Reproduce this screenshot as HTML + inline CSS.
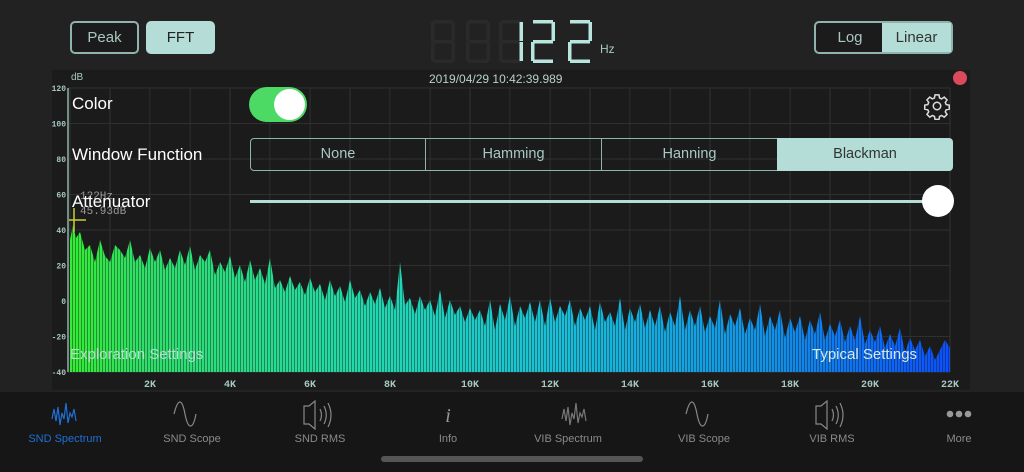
<!DOCTYPE html>
<html><head><meta charset="utf-8"><style>
*{margin:0;padding:0;box-sizing:border-box}
body{width:1024px;height:472px;background:#222;font-family:"Liberation Sans",sans-serif;overflow:hidden;position:relative;color:#fff}
.abs{position:absolute}
.btn{position:absolute;border:2px solid #8fb3ad;border-radius:5px;font-size:15px;color:#a8c8c3;text-align:center;line-height:29px;height:33px}
.tab{position:absolute;top:433px;font-size:11px;color:#8a8a8a;text-align:center;width:110px}
.seg{position:absolute;top:138px;height:33px;border:1.5px solid #8fb3ad;font-size:14.5px;color:#a8c8c3;text-align:center;line-height:30px}
</style></head><body>
<div class="btn" style="left:70px;top:21px;width:69px;background:#1b1b1b">Peak</div>
<div class="btn" style="left:146px;top:21px;width:69px;background:#b3ddd6;border-color:#b3ddd6;color:#222">FFT</div>
<div class="btn" style="left:814px;top:21px;width:139px;background:#1b1b1b;padding:0"><span style="position:absolute;left:0;width:68px">Log</span><span style="position:absolute;right:0;width:69px;height:29px;background:#b3ddd6;color:#333">Linear</span></div>

<svg class="abs" style="left:0;top:0" width="1024" height="70">
<defs>
<g id="d8"><rect x="2" y="20" width="20" height="3.5"/><rect x="2" y="40" width="20" height="3.5"/><rect x="2" y="59.5" width="20" height="3.5"/><rect x="0" y="22" width="3.5" height="19"/><rect x="0" y="42" width="3.5" height="19"/><rect x="20.5" y="22" width="3.5" height="19"/><rect x="20.5" y="42" width="3.5" height="19"/></g>
<g id="d2"><rect x="2" y="20" width="20" height="3.5"/><rect x="2" y="40" width="20" height="3.5"/><rect x="2" y="59.5" width="20" height="3.5"/><rect x="20.5" y="22" width="3.5" height="19"/><rect x="0" y="42" width="3.5" height="19"/></g>
</defs>
<g fill="#2a2a2a"><use href="#d8" x="431"/><use href="#d8" x="466"/><use href="#d8" x="499"/></g>
<g fill="#b8e6de">
<rect x="519.5" y="22" width="3.5" height="19"/><rect x="519.5" y="42" width="3.5" height="19"/>
<use href="#d2" x="531"/><use href="#d2" x="568"/>
</g>
</svg>
<div class="abs" style="left:600px;top:42px;font-size:12px;color:#a8c8c3">Hz</div>

<div class="abs" style="left:52px;top:70px;width:918px;height:320px;background:#1b1b1b"></div>
<div class="abs" style="left:71px;top:72px;font-size:10px;color:#a8c8c3">dB</div>
<div class="abs" style="left:429px;top:72px;font-size:12px;color:#b8d0cc">2019/04/29 10:42:39.989</div>
<div class="abs" style="left:953px;top:71px;width:14px;height:14px;border-radius:50%;background:#d94a5a"></div>

<svg class="abs" style="left:0;top:0" width="1024" height="472">
<defs>
<linearGradient id="g" x1="70" x2="950" y1="0" y2="0" gradientUnits="userSpaceOnUse">
<stop offset="0" stop-color="#33ee33"/><stop offset="0.08" stop-color="#2ee066"/><stop offset="0.35" stop-color="#20d8b0"/><stop offset="0.55" stop-color="#18c0d8"/><stop offset="0.8" stop-color="#1090e8"/><stop offset="1" stop-color="#0a50ff"/>
</linearGradient>
<pattern id="p" width="3" height="10" patternUnits="userSpaceOnUse"><rect x="0" y="0" width="1" height="10" fill="#1b1b1b" opacity="0.45"/></pattern>
</defs>
<g stroke="#333" stroke-width="1">
<path d="M70 88V372M110 88V372M150 88V372M190 88V372M230 88V372M270 88V372M310 88V372M350 88V372M390 88V372M430 88V372M470 88V372M510 88V372M550 88V372M590 88V372M630 88V372M670 88V372M710 88V372M750 88V372M790 88V372M830 88V372M870 88V372M910 88V372M950 88V372"/>
<path d="M68 88H950M68 123.5H950M68 159H950M68 194.5H950M68 230H950M68 265.5H950M68 301H950M68 336.5H950M68 372H950"/>
</g>
<line x1="68" y1="88" x2="68" y2="372" stroke="#8fb3ad" stroke-width="1.5"/>
<g fill="#a8c8c3" font-size="8" font-family="Liberation Mono" font-weight="bold" text-anchor="end">
<text x="66" y="91">120</text><text x="66" y="126.5">100</text><text x="66" y="162">80</text><text x="66" y="197.5">60</text><text x="66" y="233">40</text><text x="66" y="268.5">20</text><text x="66" y="304">0</text><text x="66" y="339.5">-20</text><text x="66" y="375">-40</text>
</g>
<path d="M70 372L70 240L73 225L76 238L80 232L85 250L90 245L95 262L100 240L105 256L110 262L115 245L120 250L125 258L130 240L135 262L140 255L145 268L150 248L155 262L160 250L165 270L170 258L175 268L180 250L185 265L190 246L195 270L200 255L205 262L210 250L215 275L220 262L225 272L230 256L235 278L240 265L245 282L250 260L255 280L260 268L265 284L270 258L275 288L280 280L285 292L290 276L295 290L300 282L305 295L310 278L315 292L320 284L325 300L330 280L335 296L340 286L345 302L350 280L355 298L360 290L365 306L370 292L375 304L380 288L385 308L390 296L395 310L400 262L405 305L410 298L415 314L420 296L425 310L430 300L435 316L440 290L445 318L450 300L455 315L460 306L465 322L470 308L475 320L480 310L485 326L490 300L495 330L500 304L505 320L510 296L515 326L520 306L525 318L530 302L535 322L540 300L545 326L550 298L555 322L560 306L565 316L570 300L575 326L580 308L585 320L590 306L595 330L600 302L605 322L610 312L615 326L620 298L625 330L630 308L635 322L640 304L645 328L650 310L655 326L660 306L665 332L670 312L675 326L680 296L685 330L690 310L695 326L700 306L705 332L710 316L715 328L720 300L725 334L730 314L735 326L740 308L745 334L750 318L755 330L760 304L765 336L770 316L775 330L780 310L785 338L790 318L795 332L800 316L805 340L810 320L815 334L820 312L825 340L830 324L835 336L840 320L845 342L850 326L855 340L860 316L865 344L870 330L875 342L880 326L885 348L890 334L895 346L900 328L905 352L910 338L915 350L920 340L925 356L930 346L935 360L940 350L945 340L950 348L950 372Z" fill="url(#g)"/>
<path d="M70 88H950V372H70Z" fill="url(#p)"/>
<g fill="#a8c8c3" font-size="10" font-family="Liberation Mono" font-weight="bold" text-anchor="middle">
<text x="150" y="387">2K</text><text x="230" y="387">4K</text><text x="310" y="387">6K</text><text x="390" y="387">8K</text><text x="470" y="387">10K</text><text x="550" y="387">12K</text><text x="630" y="387">14K</text><text x="710" y="387">16K</text><text x="790" y="387">18K</text><text x="870" y="387">20K</text><text x="950" y="387">22K</text>
</g>
<text x="80" y="199" fill="#999" font-size="11" font-family="Liberation Mono">122Hz</text>
<text x="80" y="214" fill="#999" font-size="11" font-family="Liberation Mono">45.93dB</text>
<line x1="69" y1="220" x2="86" y2="220" stroke="#cc3" stroke-width="1.5"/><line x1="74" y1="208" x2="74" y2="232" stroke="#cc3" stroke-width="1.5"/>
</svg>

<div class="abs" style="left:72px;top:94px;font-size:17px">Color</div>
<div class="abs" style="left:249px;top:87px;width:58px;height:35px;border-radius:18px;background:#4cd964"><div style="position:absolute;right:2px;top:2px;width:31px;height:31px;border-radius:50%;background:#fff"></div></div>
<svg class="abs" style="left:923px;top:92px" width="28" height="28" viewBox="0 0 24 24" fill="none" stroke="#ddd" stroke-width="1.3"><circle cx="12" cy="12" r="3.2"/><path d="M10.3 2.5h3.4l.5 2.6 1.8.8 2.2-1.5 2.4 2.4-1.5 2.2.8 1.8 2.6.5v3.4l-2.6.5-.8 1.8 1.5 2.2-2.4 2.4-2.2-1.5-1.8.8-.5 2.6h-3.4l-.5-2.6-1.8-.8-2.2 1.5-2.4-2.4 1.5-2.2-.8-1.800-2.6-.5v-3.4l2.6-.5.8-1.8-1.5-2.2 2.4-2.4 2.2 1.5 1.8-.8z"/></svg>
<div class="abs" style="left:72px;top:145px;font-size:17px">Window Function</div>
<div class="seg" style="left:250px;width:176px;border-radius:4px 0 0 4px">None</div>
<div class="seg" style="left:425px;width:177px">Hamming</div>
<div class="seg" style="left:601px;width:177px">Hanning</div>
<div class="seg" style="left:777px;width:176px;background:#b3ddd6;border-color:#b3ddd6;color:#333;border-radius:0 4px 4px 0">Blackman</div>
<div class="abs" style="left:72px;top:192px;font-size:17px">Attenuator</div>
<div class="abs" style="left:250px;top:200px;width:680px;height:3px;background:#b3ddd6"></div>
<div class="abs" style="left:922px;top:185px;width:32px;height:32px;border-radius:50%;background:#fff"></div>
<div class="abs" style="left:70px;top:346px;font-size:15px;color:#bcd9d2">Exploration Settings</div>
<div class="abs" style="left:812px;top:346px;font-size:15px;color:#d8e8e6">Typical Settings</div>

<div class="abs" style="left:0;top:392px;width:1024px;height:80px;background:#161616"></div>
<svg class="abs" style="left:0;top:392px" width="1024" height="50" fill="none" stroke-width="1.2">
<path d="M52 27 l2-10 2 12 2-14 2 18 2-12 2 6 2-16 2 20 2-10 2 4 2-8 2 12" stroke="#1f6fd6"/>
<path d="M174 22 c4-16 8-16 11 0 s8 16 11 0" stroke="#888"/>
<path d="M304 14h5l6-5v28l-6-5h-5z M320 17c2 4 2 8 0 12 M324 14c3 6 3 12 0 18 M328 11c4 8 4 16 0 24" stroke="#888"/>
<path d="M562 27 l2-10 2 12 2-14 2 18 2-12 2 6 2-16 2 20 2-10 2 4 2-8 2 12" stroke="#777"/>
<path d="M686 22 c4-16 8-16 11 0 s8 16 11 0" stroke="#888"/>
<path d="M816 14h5l6-5v28l-6-5h-5z M832 17c2 4 2 8 0 12 M836 14c3 6 3 12 0 18 M840 11c4 8 4 16 0 24" stroke="#888"/>
<g fill="#999" stroke="none"><circle cx="950" cy="22" r="3.3"/><circle cx="959" cy="22" r="3.3"/><circle cx="968" cy="22" r="3.3"/></g>
<text x="448" y="30" fill="#999" stroke="none" font-family="Liberation Serif" font-style="italic" font-size="20" text-anchor="middle">i</text>
</svg>
<div class="tab" style="left:10px;color:#1f6fd6">SND Spectrum</div>
<div class="tab" style="left:137px">SND Scope</div>
<div class="tab" style="left:265px">SND RMS</div>
<div class="tab" style="left:393px">Info</div>
<div class="tab" style="left:513px">VIB Spectrum</div>
<div class="tab" style="left:649px">VIB Scope</div>
<div class="tab" style="left:777px">VIB RMS</div>
<div class="tab" style="left:904px">More</div>
<div class="abs" style="left:381px;top:456px;width:262px;height:6px;border-radius:3px;background:#555"></div>
</body></html>
